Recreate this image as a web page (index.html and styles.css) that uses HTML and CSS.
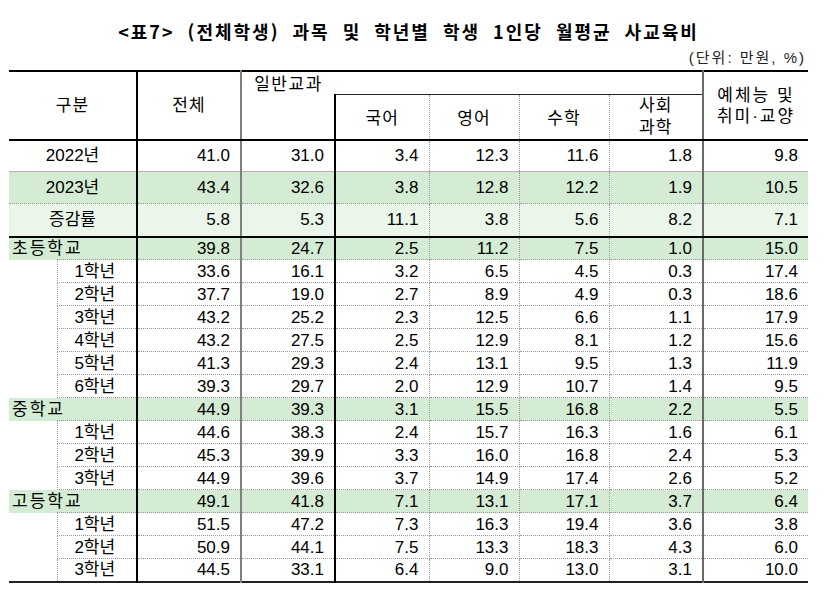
FILE: index.html
```html
<!DOCTYPE html>
<html lang="ko">
<head>
<meta charset="utf-8">
<title>표7 사교육비</title>
<link rel="stylesheet" href="styles.css">
</head>
<body>
<div class="page">
  <h1 class="title">&lt;표7&gt; (전체학생) 과목 및 학년별 학생 1인당 월평균 사교육비</h1>
  <div class="unit">(단위: 만원, %)</div>
  <table class="tbl">
    <colgroup>
      <col class="w-blank"><col class="w-label"><col class="w-tot"><col class="w-gen">
      <col class="w-kor"><col class="w-eng"><col class="w-math"><col class="w-soc"><col class="w-art">
    </colgroup>
    <thead>
      <tr class="h1">
        <th colspan="2" rowspan="2" class="h-gubun">구분</th>
        <th rowspan="2" class="h-tot">전체</th>
        <th class="h-gen">일반교과</th>
        <th colspan="4" class="h-span"></th>
        <th rowspan="2" class="h-art"><span class="ln">예체능 및</span><span class="ln">취미·교양</span></th>
      </tr>
      <tr class="h2">
        <th class="h-genblank"></th>
        <th class="h-sub h-kor">국어</th>
        <th class="h-sub">영어</th>
        <th class="h-sub">수학</th>
        <th class="h-sub h-soc"><span class="ln">사회</span><span class="ln">과학</span></th>
      </tr>
    </thead>
    <tbody>
      <tr class="yr y22"><td colspan="2" class="lbl">2022년</td><td>41.0</td><td>31.0</td><td>3.4</td><td>12.3</td><td>11.6</td><td>1.8</td><td>9.8</td></tr>
      <tr class="yr y23 green"><td colspan="2" class="lbl">2023년</td><td>43.4</td><td>32.6</td><td>3.8</td><td>12.8</td><td>12.2</td><td>1.9</td><td>10.5</td></tr>
      <tr class="yr rate"><td colspan="2" class="lbl">증감률</td><td>5.8</td><td>5.3</td><td>11.1</td><td>3.8</td><td>5.6</td><td>8.2</td><td>7.1</td></tr>

      <tr class="row green"><td colspan="2" class="school">초등학교</td><td>39.8</td><td>24.7</td><td>2.5</td><td>11.2</td><td>7.5</td><td>1.0</td><td>15.0</td></tr>
      <tr class="row"><td class="blank"></td><td class="grade">1학년</td><td>33.6</td><td>16.1</td><td>3.2</td><td>6.5</td><td>4.5</td><td>0.3</td><td>17.4</td></tr>
      <tr class="row"><td class="blank"></td><td class="grade">2학년</td><td>37.7</td><td>19.0</td><td>2.7</td><td>8.9</td><td>4.9</td><td>0.3</td><td>18.6</td></tr>
      <tr class="row"><td class="blank"></td><td class="grade">3학년</td><td>43.2</td><td>25.2</td><td>2.3</td><td>12.5</td><td>6.6</td><td>1.1</td><td>17.9</td></tr>
      <tr class="row"><td class="blank"></td><td class="grade">4학년</td><td>43.2</td><td>27.5</td><td>2.5</td><td>12.9</td><td>8.1</td><td>1.2</td><td>15.6</td></tr>
      <tr class="row"><td class="blank"></td><td class="grade">5학년</td><td>41.3</td><td>29.3</td><td>2.4</td><td>13.1</td><td>9.5</td><td>1.3</td><td>11.9</td></tr>
      <tr class="row"><td class="blank"></td><td class="grade">6학년</td><td>39.3</td><td>29.7</td><td>2.0</td><td>12.9</td><td>10.7</td><td>1.4</td><td>9.5</td></tr>

      <tr class="row green"><td colspan="2" class="school">중학교</td><td>44.9</td><td>39.3</td><td>3.1</td><td>15.5</td><td>16.8</td><td>2.2</td><td>5.5</td></tr>
      <tr class="row"><td class="blank"></td><td class="grade">1학년</td><td>44.6</td><td>38.3</td><td>2.4</td><td>15.7</td><td>16.3</td><td>1.6</td><td>6.1</td></tr>
      <tr class="row"><td class="blank"></td><td class="grade">2학년</td><td>45.3</td><td>39.9</td><td>3.3</td><td>16.0</td><td>16.8</td><td>2.4</td><td>5.3</td></tr>
      <tr class="row"><td class="blank"></td><td class="grade">3학년</td><td>44.9</td><td>39.6</td><td>3.7</td><td>14.9</td><td>17.4</td><td>2.6</td><td>5.2</td></tr>

      <tr class="row green"><td colspan="2" class="school">고등학교</td><td>49.1</td><td>41.8</td><td>7.1</td><td>13.1</td><td>17.1</td><td>3.7</td><td>6.4</td></tr>
      <tr class="row"><td class="blank"></td><td class="grade">1학년</td><td>51.5</td><td>47.2</td><td>7.3</td><td>16.3</td><td>19.4</td><td>3.6</td><td>3.8</td></tr>
      <tr class="row"><td class="blank"></td><td class="grade">2학년</td><td>50.9</td><td>44.1</td><td>7.5</td><td>13.3</td><td>18.3</td><td>4.3</td><td>6.0</td></tr>
      <tr class="row"><td class="blank"></td><td class="grade">3학년</td><td>44.5</td><td>33.1</td><td>6.4</td><td>9.0</td><td>13.0</td><td>3.1</td><td>10.0</td></tr>
    </tbody>
  </table>
</div>
</body>
</html>
```
FILE: styles.css
```css
html, body {
  margin: 0;
  padding: 0;
  background: #fff;
}
body {
  font-family: "Liberation Sans", "Noto Sans CJK KR", sans-serif;
  color: #000;
}
.page {
  width: 799px;
  padding: 18px 0 0 9px;
}
.title {
  margin: 0;
  height: 26px;
  line-height: 26px;
  font-family: "Noto Sans CJK KR", sans-serif;
  font-size: 18px;
  font-weight: bold;
  letter-spacing: 2px;
  word-spacing: 6px;
  text-align: center;
  white-space: nowrap;
}
.unit {
  margin-top: 4px;
  height: 20px;
  line-height: 20px;
  font-size: 15px;
  letter-spacing: 2px;
  text-align: right;
  padding-right: 2px;
  color: #222;
}
.tbl {
  margin-top: 2px;
  width: 799px;
  table-layout: fixed;
  border-collapse: collapse;
  border-top: 2px solid #000;
  border-bottom: 2px solid #222;
  font-size: 17px;
}
.w-blank { width: 48px; }
.w-label { width: 80px; }
.w-tot { width: 104px; }
.w-gen { width: 94px; }
.w-kor { width: 94px; }
.w-eng { width: 90px; }
.w-math { width: 90px; }
.w-soc { width: 94px; }
.w-art { width: 105px; }

th, td {
  padding: 0;
  line-height: 1;
}
th {
  font-weight: normal;
  letter-spacing: 1px;
  text-align: center;
  vertical-align: middle;
}
.ln {
  display: block;
}
.h1 { height: 23px; }
.h2 { height: 44px; }
.h-gubun {
  border-right: 2px solid #000;
  border-bottom: 2px solid #000;
}
.h-tot {
  border-right: 2px solid #808080;
  border-bottom: 2px solid #000;
}
.h-gen {
  padding-top: 2px;
  letter-spacing: 1.5px;
}
.h-span {
  border-bottom: 1px solid #222;
  border-right: 2px solid #6a6a6a;
}
.h-art {
  border-bottom: 2px solid #000;
  letter-spacing: 2px;
  padding-top: 2px;
}
.h-art .ln {
  height: 21px;
  line-height: 21px;
}
.h-genblank {
  border-bottom: 2px solid #000;
}
.h-sub {
  border-bottom: 2px solid #000;
  border-right: 1px dotted #9a9a9a;
  padding-top: 4px;
}
.h-kor {
  border-left: 2px solid #000;
}
.h-soc {
  border-right: 2px solid #6a6a6a;
  padding-top: 0;
}
.h-soc .ln {
  height: 22px;
  line-height: 22px;
}

td {
  text-align: right;
  padding-right: 10px;
  vertical-align: middle;
  border-bottom: 1px dotted #9a9a9a;
}
td:nth-last-child(7) {
  border-left: 2px solid #000;
  border-right: 2px solid #808080;
}
td:nth-last-child(6) {
  border-right: 2px solid #000;
}
td:nth-last-child(5),
td:nth-last-child(4),
td:nth-last-child(3) {
  border-right: 1px dotted #9a9a9a;
}
td:nth-last-child(2) {
  border-right: 2px solid #6a6a6a;
}

.yr { height: 32px; }
.rate { height: 33px; }
.row { height: 23px; }

.green td { background: #d4ecd3; }
.rate td { background: #ebf6ea; }
.y22 td { border-bottom: 1px solid #b0b0b0; }
.rate td { border-bottom: 2px solid #000; }

.lbl {
  text-align: center;
  padding-right: 0;
}
.school {
  text-align: left;
  padding: 0 0 0 3px;
  letter-spacing: 2px;
  border-bottom: none;
}
.blank {
  border-bottom: none;
  padding: 0;
}
.grade {
  text-align: center;
  padding: 0 4px 0 0;
  border-left: 1px dotted #9a9a9a;
  border-top: 1px dotted #9a9a9a;
}
```
